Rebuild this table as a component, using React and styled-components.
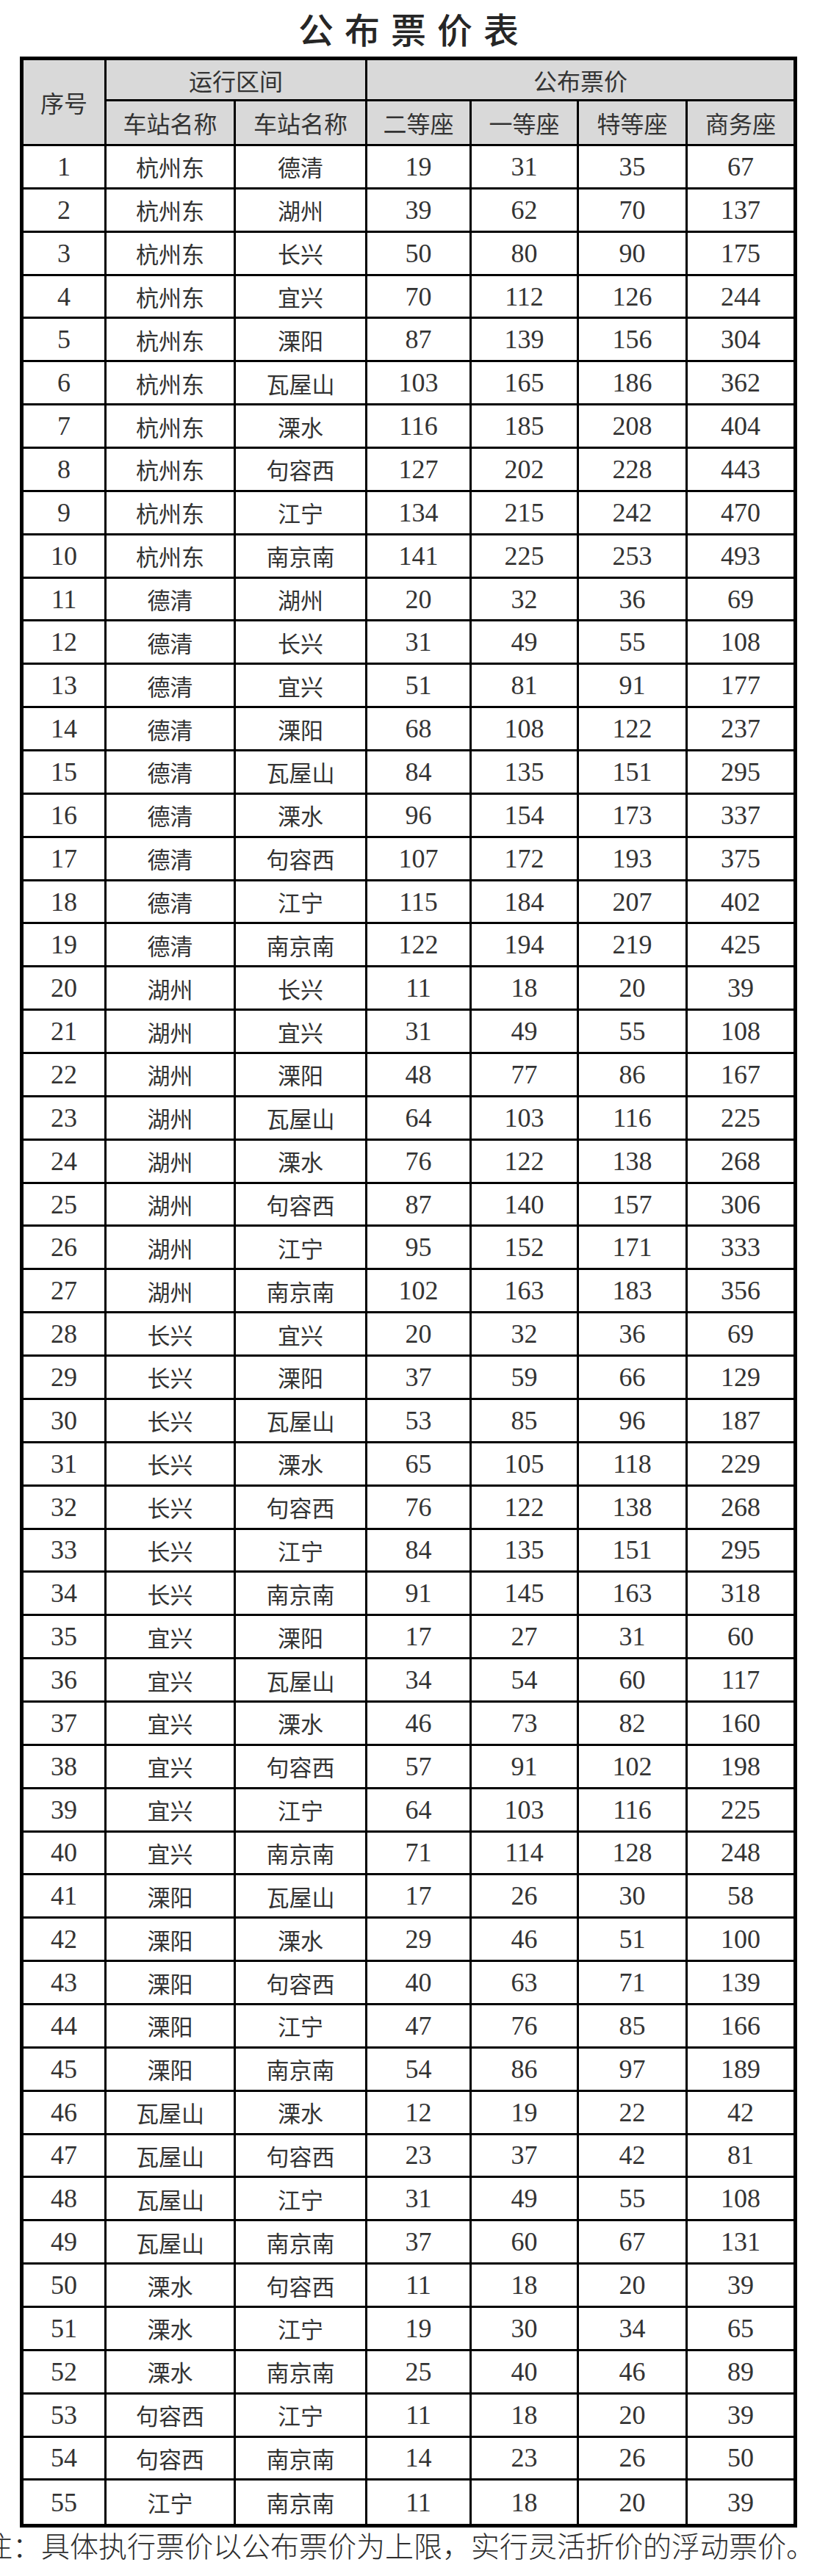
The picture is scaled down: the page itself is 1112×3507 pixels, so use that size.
import React from "react";
import styled, { createGlobalStyle } from "styled-components";

const GlobalStyle = createGlobalStyle`
	html, body {
		margin: 0;
		padding: 0;
		background: #ffffff;
	}
	body {
		width: 1112px;
		overflow: hidden;
		font-family: "Noto Sans CJK SC", "Noto Sans", sans-serif;
		color: #333333;
	}
`;

const Page = styled.div`
	width: 1112px;
	display: flex;
	flex-direction: column;
	align-items: stretch;
`;

const Title = styled.h1`
	margin: 0;
	height: 77px;
	padding-left: 15px;
	text-align: center;
	font-family: "Noto Sans CJK SC", sans-serif;
	font-size: 48px;
	font-weight: 500;
	line-height: 77px;
	letter-spacing: 15px;
	color: #262626;
`;

const Table = styled.table`
	margin-left: 27px;
	width: 1058px;
	border: 5px solid #000;
	border-collapse: separate;
	border-spacing: 0;
	table-layout: fixed;
	box-sizing: border-box;
`;

const HeadCell = styled.th`
	background: #d9d9d9;
	height: ${(p) => p.$h}px;
	padding: 0;
	box-sizing: border-box;
	border-right: ${(p) => (p.$last ? "none" : "3px solid #000")};
	border-bottom: 3px solid #000;
	font-family: "Noto Sans CJK SC", sans-serif;
	font-size: 32px;
	font-weight: 400;
	line-height: 1;
	color: #333333;
	text-align: center;
	vertical-align: middle;
`;

const Cell = styled.td`
	height: 58.87px;
	padding: 0;
	box-sizing: border-box;
	border-right: ${(p) => (p.$last ? "none" : "3px solid #000")};
	border-bottom: ${(p) => (p.$bottom ? "none" : "3px solid #000")};
	font-family: ${(p) =>
		p.$num ? `"Liberation Serif", serif` : `"Noto Sans CJK SC", sans-serif`};
	font-size: ${(p) => (p.$num ? "36px" : "31px")};
	line-height: 1;
	color: #333333;
	text-align: center;
	vertical-align: middle;
`;

const Note = styled.p`
	margin: 0 0 0 -22px;
	white-space: nowrap;
	font-family: "Noto Sans CJK SC", sans-serif;
	font-size: 39px;
	font-weight: 300;
	line-height: 46px;
	color: #2e2e2e;
`;

const widths = [113, 176, 179, 142, 146, 148, 144];

const rows = [
	["杭州东", "德清", 19, 31, 35, 67],
	["杭州东", "湖州", 39, 62, 70, 137],
	["杭州东", "长兴", 50, 80, 90, 175],
	["杭州东", "宜兴", 70, 112, 126, 244],
	["杭州东", "溧阳", 87, 139, 156, 304],
	["杭州东", "瓦屋山", 103, 165, 186, 362],
	["杭州东", "溧水", 116, 185, 208, 404],
	["杭州东", "句容西", 127, 202, 228, 443],
	["杭州东", "江宁", 134, 215, 242, 470],
	["杭州东", "南京南", 141, 225, 253, 493],
	["德清", "湖州", 20, 32, 36, 69],
	["德清", "长兴", 31, 49, 55, 108],
	["德清", "宜兴", 51, 81, 91, 177],
	["德清", "溧阳", 68, 108, 122, 237],
	["德清", "瓦屋山", 84, 135, 151, 295],
	["德清", "溧水", 96, 154, 173, 337],
	["德清", "句容西", 107, 172, 193, 375],
	["德清", "江宁", 115, 184, 207, 402],
	["德清", "南京南", 122, 194, 219, 425],
	["湖州", "长兴", 11, 18, 20, 39],
	["湖州", "宜兴", 31, 49, 55, 108],
	["湖州", "溧阳", 48, 77, 86, 167],
	["湖州", "瓦屋山", 64, 103, 116, 225],
	["湖州", "溧水", 76, 122, 138, 268],
	["湖州", "句容西", 87, 140, 157, 306],
	["湖州", "江宁", 95, 152, 171, 333],
	["湖州", "南京南", 102, 163, 183, 356],
	["长兴", "宜兴", 20, 32, 36, 69],
	["长兴", "溧阳", 37, 59, 66, 129],
	["长兴", "瓦屋山", 53, 85, 96, 187],
	["长兴", "溧水", 65, 105, 118, 229],
	["长兴", "句容西", 76, 122, 138, 268],
	["长兴", "江宁", 84, 135, 151, 295],
	["长兴", "南京南", 91, 145, 163, 318],
	["宜兴", "溧阳", 17, 27, 31, 60],
	["宜兴", "瓦屋山", 34, 54, 60, 117],
	["宜兴", "溧水", 46, 73, 82, 160],
	["宜兴", "句容西", 57, 91, 102, 198],
	["宜兴", "江宁", 64, 103, 116, 225],
	["宜兴", "南京南", 71, 114, 128, 248],
	["溧阳", "瓦屋山", 17, 26, 30, 58],
	["溧阳", "溧水", 29, 46, 51, 100],
	["溧阳", "句容西", 40, 63, 71, 139],
	["溧阳", "江宁", 47, 76, 85, 166],
	["溧阳", "南京南", 54, 86, 97, 189],
	["瓦屋山", "溧水", 12, 19, 22, 42],
	["瓦屋山", "句容西", 23, 37, 42, 81],
	["瓦屋山", "江宁", 31, 49, 55, 108],
	["瓦屋山", "南京南", 37, 60, 67, 131],
	["溧水", "句容西", 11, 18, 20, 39],
	["溧水", "江宁", 19, 30, 34, 65],
	["溧水", "南京南", 25, 40, 46, 89],
	["句容西", "江宁", 11, 18, 20, 39],
	["句容西", "南京南", 14, 23, 26, 50],
	["江宁", "南京南", 11, 18, 20, 39],
];

const seats = ["二等座", "一等座", "特等座", "商务座"];

const App = () => {
	return (
		<Page>
			<GlobalStyle />
			<Title>公布票价表</Title>
			<Table>
				<colgroup>
					{widths.map((w, i) => (
						<col key={i} style={{ width: w }} />
					))}
				</colgroup>
				<thead>
					<tr>
						<HeadCell rowSpan={2} $h={117}>序号</HeadCell>
						<HeadCell colSpan={2} $h={56}>运行区间</HeadCell>
						<HeadCell colSpan={4} $h={56} $last>公布票价</HeadCell>
					</tr>
					<tr>
						<HeadCell $h={61}>车站名称</HeadCell>
						<HeadCell $h={61}>车站名称</HeadCell>
						{seats.map((s, i) => (
							<HeadCell key={s} $h={61} $last={i === seats.length - 1}>
								{s}
							</HeadCell>
						))}
					</tr>
				</thead>
				<tbody>
					{rows.map((r, i) => {
						const bottom = i === rows.length - 1;
						return (
							<tr key={i}>
								<Cell $num $bottom={bottom}>{i + 1}</Cell>
								<Cell $bottom={bottom}>{r[0]}</Cell>
								<Cell $bottom={bottom}>{r[1]}</Cell>
								{r.slice(2).map((v, j) => (
									<Cell key={j} $num $bottom={bottom} $last={j === 3}>
										{v}
									</Cell>
								))}
							</tr>
						);
					})}
				</tbody>
			</Table>
			<Note>注：具体执行票价以公布票价为上限，实行灵活折价的浮动票价。</Note>
		</Page>
	);
};

export default App;
